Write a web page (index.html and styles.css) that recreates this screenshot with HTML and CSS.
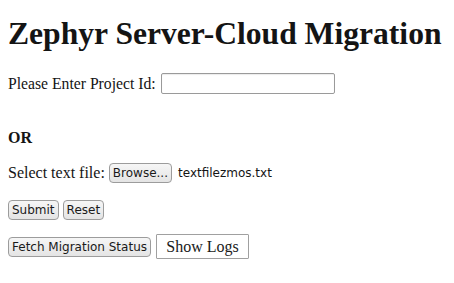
FILE: index.html
```html
<!DOCTYPE html>
<html lang="en">

<head>
    <meta charset="UTF-8">
    <title>Zephyr Server-Cloud Migration</title>
    <link rel="stylesheet" href="styles.css">
</head>

<body>
    <h1 class="title">Zephyr Server-Cloud Migration</h1>

    <form class="migrate-form">
        <div class="row id-row">
            <label for="projectId">Please Enter Project Id:</label>
            <input type="text" id="projectId" class="input-id">
        </div>

        <p class="or-text">OR</p>

        <div class="row file-row">
            <span>Select text file:</span>
            <span class="btn">Browse...</span>
            <span class="file-name">textfilezmos.txt</span>
        </div>

        <div class="row action-row">
            <button type="submit" class="btn">Submit</button>
            <button type="reset" class="btn">Reset</button>
        </div>
    </form>

    <div class="row status-row">
        <button class="btn">Fetch Migration Status</button>
        <button class="btn-logs">Show Logs</button>
    </div>
</body>

</html>
```

FILE: styles.css
```css
/* Base Styles */
body {
    font-family: "Liberation Serif", serif;
    font-size: 16px;
    margin: 8px;
    color: #141414;
    background: #fff;
}

.title {
    font-size: 31.6px;
    font-weight: bold;
    white-space: nowrap;
    margin: 8px 0 21px;
}

.row {
    display: flex;
    align-items: center;
    gap: 4px;
    margin: 0;
}

.id-row {
    gap: 5px;
}

.id-row label {
    font-size: 15.7px;
}

.input-id {
    box-sizing: border-box;
    width: 174px;
    height: 21px;
    border: 1px solid #9a9a9a;
    border-radius: 2px;
    box-shadow: inset 0 1px 1px rgba(0, 0, 0, 0.08);
}

.or-text {
    font-weight: bold;
    margin: 35px 0 16px;
}

.file-row {
    margin-bottom: 17px;
}

.action-row {
    margin-bottom: 14px;
}

.btn {
    box-sizing: border-box;
    height: 20px;
    font-family: "DejaVu Sans", sans-serif;
    font-size: 12px;
    line-height: 14px;
    color: #1a1a1a;
    background: linear-gradient(#f6f6f6, #e4e4e4);
    border: 1px solid #9c9c9c;
    border-radius: 4px;
    padding: 2px 3px;
}

.file-name {
    font-family: "DejaVu Sans", sans-serif;
    font-size: 12px;
    margin-left: 2px;
}

.status-row {
    gap: 5px;
}

.btn-logs {
    box-sizing: border-box;
    height: 25px;
    width: 93px;
    font-family: "Liberation Serif", serif;
    font-size: 16px;
    color: #1a1a1a;
    background: #fff;
    border: 1px solid #a0a0a0;
    border-radius: 1px;
    padding: 0;
}
```
